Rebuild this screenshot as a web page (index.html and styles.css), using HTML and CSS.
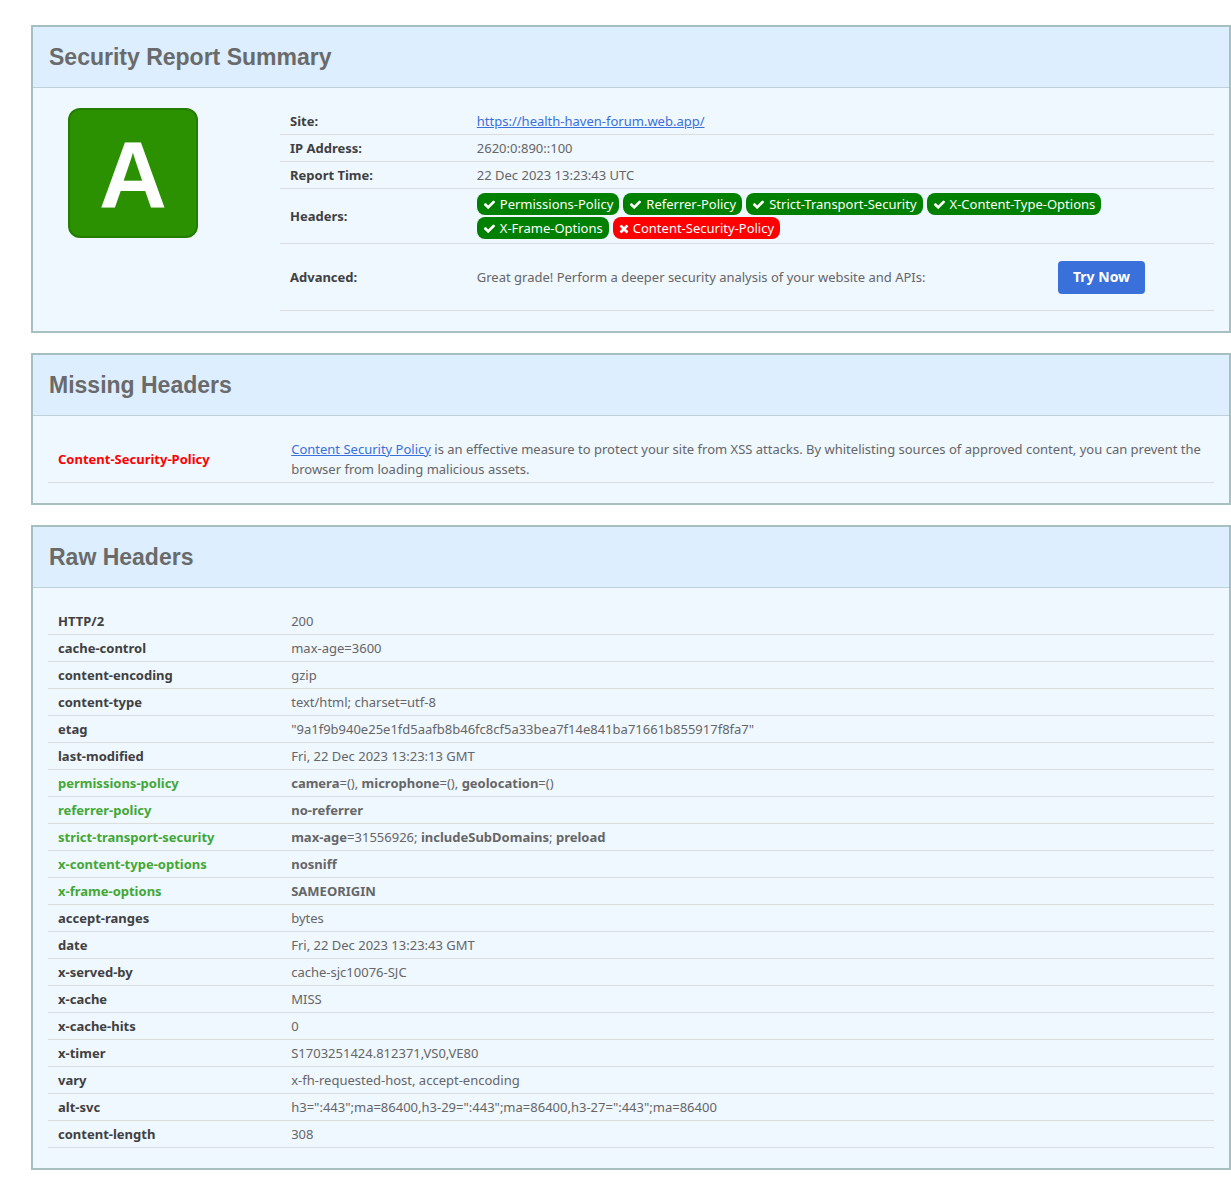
FILE: index.html
```html
<!DOCTYPE html>
<html lang="en">
<head>
<meta charset="utf-8">
<meta name="viewport" content="width=device-width, initial-scale=1">
<title>Security Report</title>
<link rel="stylesheet" href="styles.css">
</head>
<body>
<svg class="sprite" aria-hidden="true">
  <symbol id="check" viewBox="0 0 1792 1792"><path d="M1671 566q0 40-28 68l-724 724-136 136q-28 28-68 28t-68-28l-136-136-362-362q-28-28-28-68t28-68l136-136q28-28 68-28t68 28l294 295 656-657q28-28 68-28t68 28l136 136q28 28 28 68z"/></symbol>
  <symbol id="times" viewBox="192 0 1408 1792"><path d="M1490 1322q0 40-28 68l-136 136q-28 28-68 28t-68-28l-294-294-294 294q-28 28-68 28t-68-28l-136-136q-28-28-28-68t28-68l294-294-294-294q-28-28-28-68t28-68l136-136q28-28 68-28t68 28l294 294 294-294q28-28 68-28t68 28l136 136q28 28 28 68t-28 68l-294 294 294 294q28 28 28 68z"/></symbol>
</svg>
<main class="report">
  <section class="card">
    <h2 class="card-title">Security Report Summary</h2>
    <div class="card-body summary">
      <div class="score"><div class="grade">A</div></div>
      <table class="data">
        <colgroup><col class="col-label"><col><col class="col-action"></colgroup>
        <tbody>
          <tr><th scope="row">Site:</th><td colspan="2"><a href="https://health-haven-forum.web.app/">https://health-haven-forum.web.app/</a></td></tr>
          <tr><th scope="row">IP Address:</th><td colspan="2">2620:0:890::100</td></tr>
          <tr><th scope="row">Report Time:</th><td colspan="2">22 Dec 2023 13:23:43 UTC</td></tr>
          <tr>
            <th scope="row">Headers:</th>
            <td colspan="2">
              <ul class="pills">
                <li class="pill"><svg class="icon"><use href="#check"/></svg>Permissions-Policy</li>
                <li class="pill"><svg class="icon"><use href="#check"/></svg>Referrer-Policy</li>
                <li class="pill"><svg class="icon"><use href="#check"/></svg>Strict-Transport-Security</li>
                <li class="pill"><svg class="icon"><use href="#check"/></svg>X-Content-Type-Options</li>
                <li class="pill"><svg class="icon"><use href="#check"/></svg>X-Frame-Options</li>
                <li class="pill pill-bad"><svg class="icon icon-times"><use href="#times"/></svg>Content-Security-Policy</li>
              </ul>
            </td>
          </tr>
          <tr class="advanced"><th scope="row">Advanced:</th><td>Great grade! Perform a deeper security analysis of your website and APIs:</td><td><button class="button" type="button">Try Now</button></td></tr>
        </tbody>
      </table>
    </div>
  </section>

  <section class="card">
    <h2 class="card-title">Missing Headers</h2>
    <div class="card-body">
      <table class="data">
        <colgroup><col class="col-label"><col></colgroup>
        <tbody>
          <tr><th scope="row" class="bad">Content-Security-Policy</th><td><a href="#csp">Content Security Policy</a> is an effective measure to protect your site from XSS attacks. By whitelisting sources of approved content, you can prevent the browser from loading malicious assets.</td></tr>
        </tbody>
      </table>
    </div>
  </section>

  <section class="card">
    <h2 class="card-title">Raw Headers</h2>
    <div class="card-body">
      <table class="data">
        <colgroup><col class="col-label"><col></colgroup>
        <tbody>
          <tr><th scope="row">HTTP/2</th><td>200</td></tr>
          <tr><th scope="row">cache-control</th><td>max-age=3600</td></tr>
          <tr><th scope="row">content-encoding</th><td>gzip</td></tr>
          <tr><th scope="row">content-type</th><td>text/html; charset=utf-8</td></tr>
          <tr><th scope="row">etag</th><td>"9a1f9b940e25e1fd5aafb8b46fc8cf5a33bea7f14e841ba71661b855917f8fa7"</td></tr>
          <tr><th scope="row">last-modified</th><td>Fri, 22 Dec 2023 13:23:13 GMT</td></tr>
          <tr><th scope="row" class="good">permissions-policy</th><td><b>camera</b>=(), <b>microphone</b>=(), <b>geolocation</b>=()</td></tr>
          <tr><th scope="row" class="good">referrer-policy</th><td><b>no-referrer</b></td></tr>
          <tr><th scope="row" class="good">strict-transport-security</th><td><b>max-age</b>=31556926; <b>includeSubDomains</b>; <b>preload</b></td></tr>
          <tr><th scope="row" class="good">x-content-type-options</th><td><b>nosniff</b></td></tr>
          <tr><th scope="row" class="good">x-frame-options</th><td><b>SAMEORIGIN</b></td></tr>
          <tr><th scope="row">accept-ranges</th><td>bytes</td></tr>
          <tr><th scope="row">date</th><td>Fri, 22 Dec 2023 13:23:43 GMT</td></tr>
          <tr><th scope="row">x-served-by</th><td>cache-sjc10076-SJC</td></tr>
          <tr><th scope="row">x-cache</th><td>MISS</td></tr>
          <tr><th scope="row">x-cache-hits</th><td>0</td></tr>
          <tr><th scope="row">x-timer</th><td>S1703251424.812371,VS0,VE80</td></tr>
          <tr><th scope="row">vary</th><td>x-fh-requested-host, accept-encoding</td></tr>
          <tr><th scope="row">alt-svc</th><td>h3=":443";ma=86400,h3-29=":443";ma=86400,h3-27=":443";ma=86400</td></tr>
          <tr><th scope="row">content-length</th><td>308</td></tr>
        </tbody>
      </table>
    </div>
  </section>
</main>
</body>
</html>
```
FILE: styles.css
```css
* { box-sizing: border-box; }

body {
  margin: 0;
  background: #fff;
  color: #666;
  font: 13px/20px "Noto Sans", sans-serif;
}

.sprite { display: none; }

.report {
  display: flex;
  flex-direction: column;
  gap: 20px;
  padding: 25px 0 16px 31px;
}

.card {
  border: 2px solid #a8bfc2;
  background: #eff7ff;
}

.card-title {
  margin: 0;
  padding: 15px 16px;
  border-bottom: 1px solid #c0d0d8;
  background: #dceeff;
  color: #6a6a6a;
  font: bold 23px/30px "Liberation Sans", Arial, sans-serif;
}

.card-body { padding: 20px 15px; }

.summary { display: flex; }

.score {
  flex: 0 0 232px;
  padding-left: 20px;
}

.grade {
  width: 130px;
  height: 130px;
  border: 2px solid #257d00;
  border-radius: 12px;
  background: #2b9100;
  color: #fff;
  font: bold 94px/132px "Liberation Sans", Arial, sans-serif;
  text-align: center;
}

.data {
  width: 100%;
  border-collapse: separate;
  border-spacing: 0;
  table-layout: fixed;
}

.col-label { width: 20%; }
.col-action { width: 166px; }

.data th,
.data td {
  padding: 3px 10px;
  border-bottom: 1px solid #ddd;
  text-align: left;
  vertical-align: middle;
  overflow-wrap: break-word;
}

.data th { color: #404040; font-weight: 700; }
.data .good { color: #43a736; }
.data .bad { color: #f00; }
.data .advanced td { height: 67px; }

a { color: #3a70da; }

.pills {
  display: flex;
  flex-wrap: wrap;
  gap: 2px 4px;
  margin: 0;
  padding: 1px 0;
  list-style: none;
}

.pill {
  display: flex;
  align-items: center;
  gap: 4px;
  padding: 1px 6px;
  border-radius: 8px;
  background: #008000;
  color: #fff;
}

.pill-bad { background: #f00; }

.icon {
  width: 13px;
  height: 13px;
  fill: currentColor;
}

.icon-times { width: 10px; }

.button {
  padding: 6px 15px 7px;
  border: 0;
  border-radius: 4px;
  background: #3a70da;
  color: #fff;
  font: bold 14px/20px "Noto Sans", sans-serif;
}
```
